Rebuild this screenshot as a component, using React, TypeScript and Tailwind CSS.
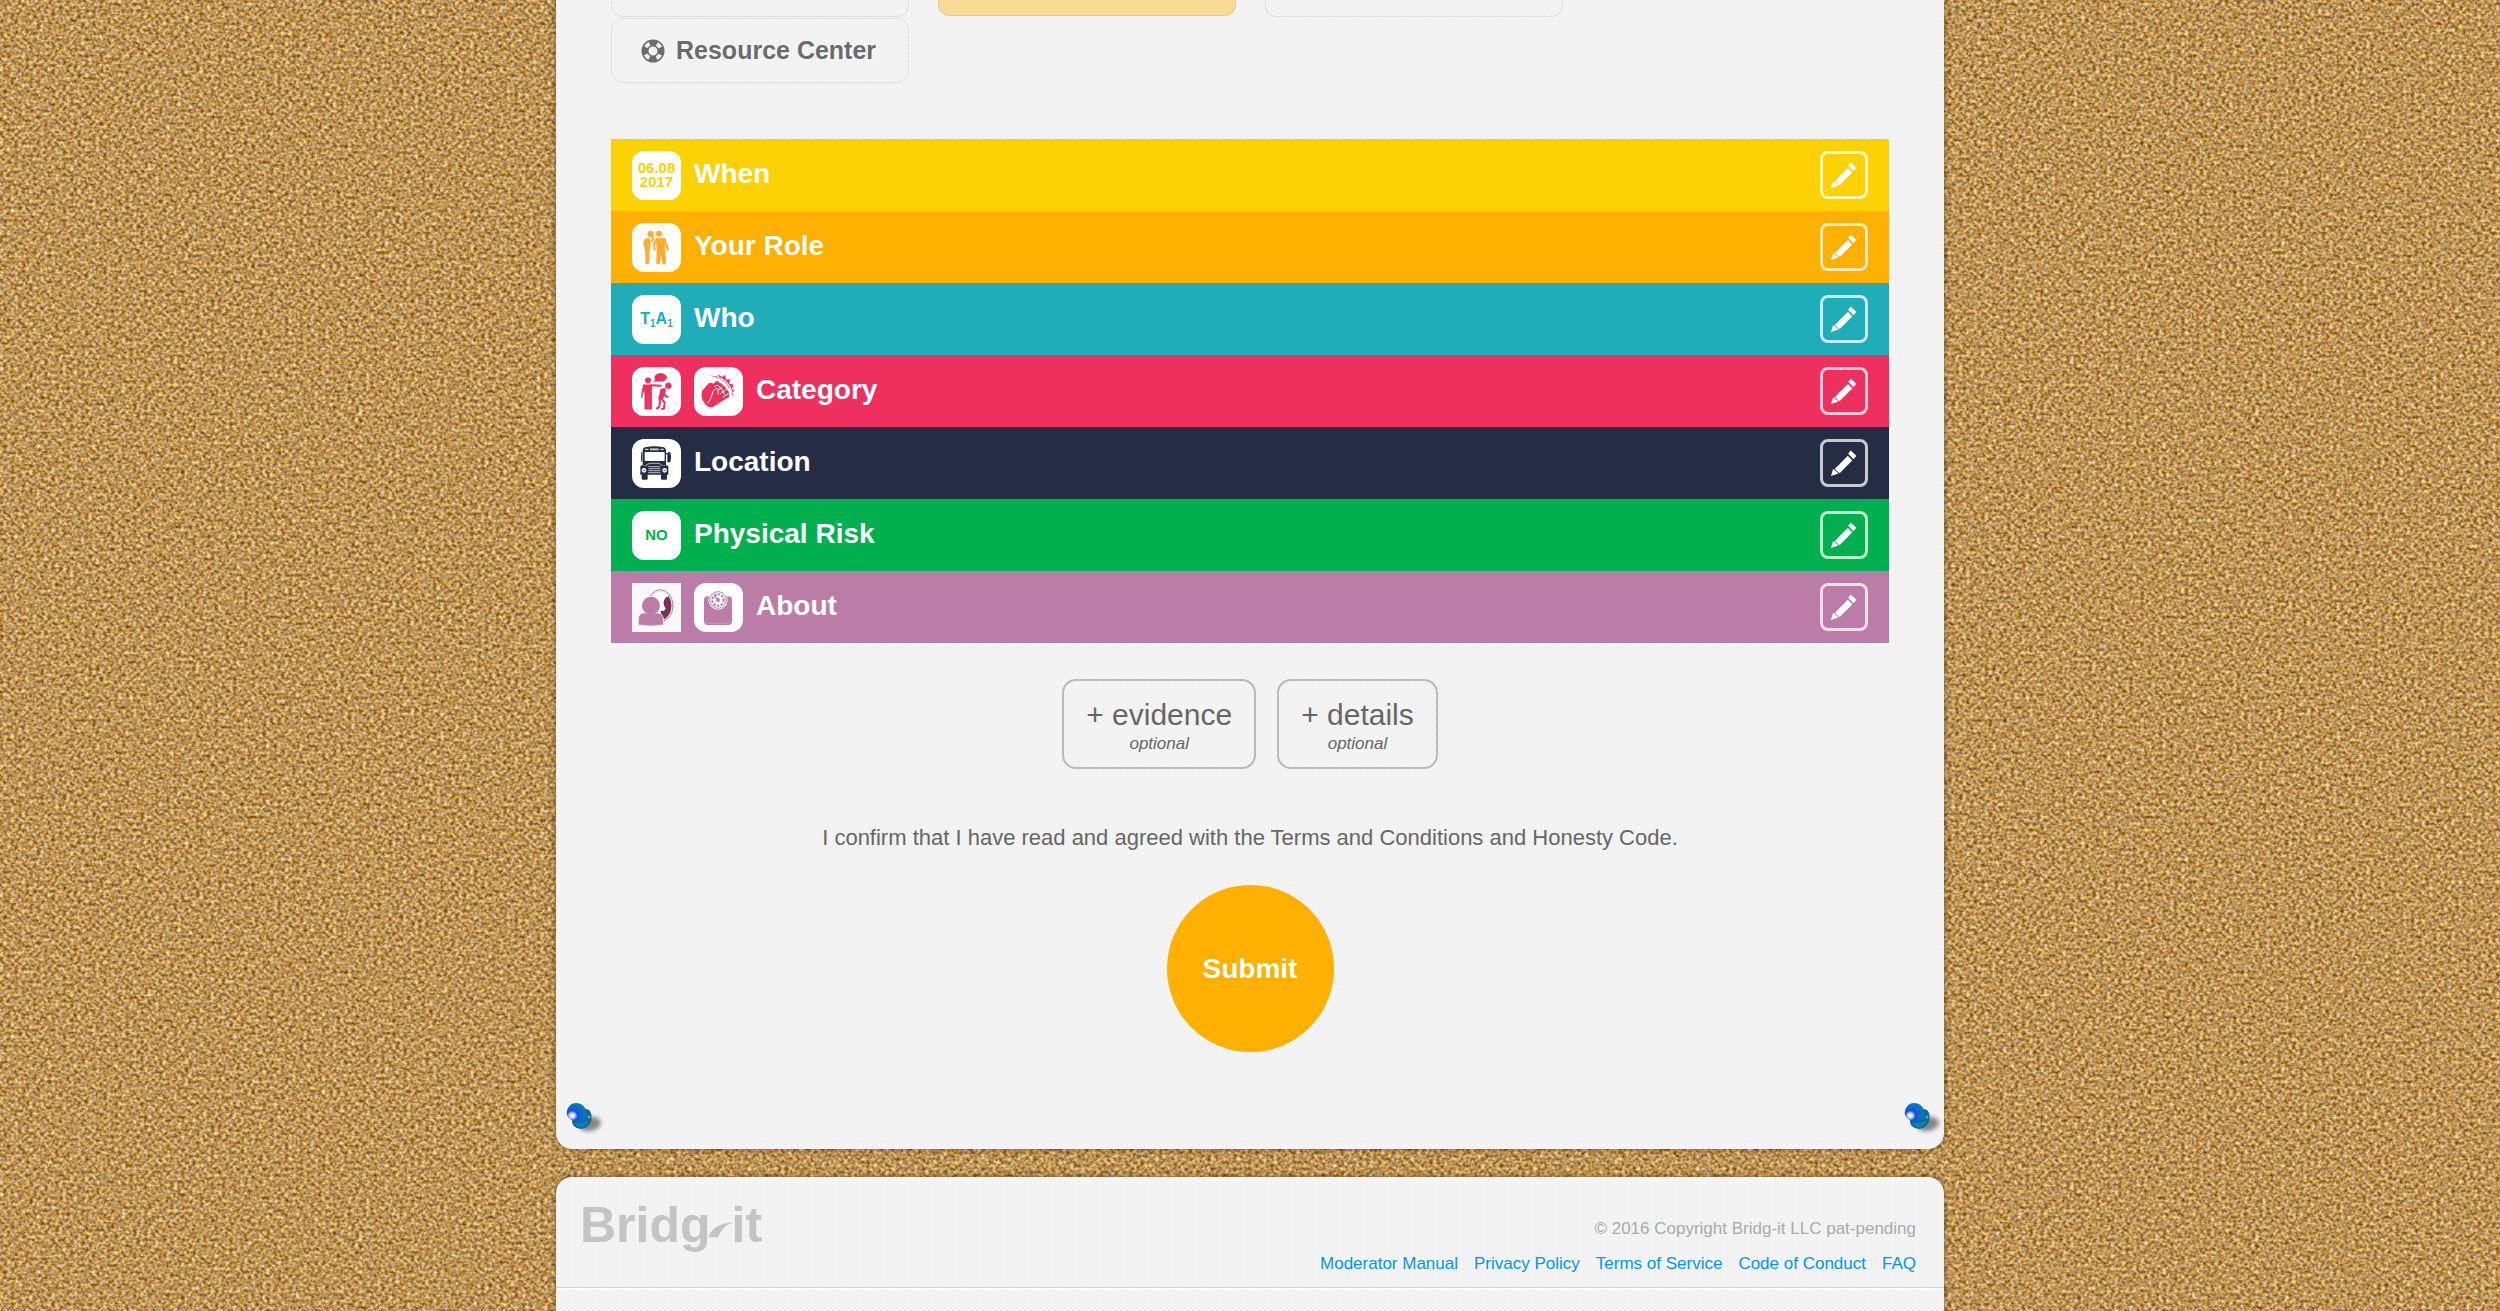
import type { ReactNode } from "react";

const paper =
  "bg-[#f4f4f4] bg-[radial-gradient(circle_at_25%_25%,#ebebeb_0,#ebebeb_1px,transparent_1px),radial-gradient(circle_at_75%_75%,#eeeeee_0,#eeeeee_1px,transparent_1px)] bg-[size:6px_4px] shadow-[0_0_6px_rgba(60,35,0,0.6)]";

function Cork() {
  return (
    <svg aria-hidden="true" className="absolute inset-0 -z-10 h-full w-full">
      <filter id="cork" x="0" y="0" width="100%" height="100%" colorInterpolationFilters="sRGB">
        <feTurbulence type="fractalNoise" baseFrequency="0.27 0.31" numOctaves="2" seed="21" />
        <feColorMatrix
          values="0.85 0.3 0 0 0.165
                  0.9 0.1 0.15 0 0.005
                  0.8 -0.05 0.6 0 -0.335
                  0 0 0 0 1"
        />
      </filter>
      <rect width="100%" height="100%" filter="url(#cork)" />
    </svg>
  );
}

function Tile({ children, square = false }: { children: ReactNode; square?: boolean }) {
  return (
    <span
      className={
        square
          ? "flex size-[49px] shrink-0 items-center justify-center bg-[#f8f8f8]"
          : "flex size-[49px] shrink-0 items-center justify-center rounded-xl bg-white"
      }
    >
      {children}
    </span>
  );
}

function Glyph({ children }: { children: ReactNode }) {
  return (
    <svg viewBox="0 0 147 147" className="size-full" aria-hidden="true" fill="none" strokeLinecap="round" strokeLinejoin="round">
      {children}
    </svg>
  );
}

function FriendsIcon() {
  return (
    <Glyph>
      <g fill="#ffab2e" stroke="#ffab2e">
        <circle cx="56" cy="33" r="9" />
        <circle cx="81" cy="32" r="8.5" />
        <path d="M44 46C34 50 32 60 37 72C41 84 42 96 40 122L50 123C53 104 52 94 52 82L55 68L53 47Z" strokeWidth="1" />
        <path d="M46 55L62 54L64 42" strokeWidth="5" fill="none" />
        <path d="M74 46H96L99 82L101 122H92L87 88L83 122H74L75 84Z" strokeWidth="2" />
        <path d="M73 49L66 64L68 80M98 49L107 80" strokeWidth="6" fill="none" />
      </g>
    </Glyph>
  );
}

function TauntIcon() {
  return (
    <Glyph>
      <g fill="#ee305f" stroke="#ee305f">
        <circle cx="48" cy="40" r="8.5" />
        <path d="M38 54H58V126H50V88H47V126H39V88Z" strokeWidth="3" />
        <path d="M36 55L31 80M58 55L86 56" strokeWidth="6" fill="none" />
        <ellipse cx="86" cy="31" rx="18" ry="12" />
        <path d="M70 36L66 44L80 42Z" strokeWidth="1" />
        <circle cx="109" cy="56" r="9" />
        <path d="M97 65L87 68L82 92L92 94L99 72Z" strokeWidth="4" />
        <path d="M98 70L96 82L107 90M87 94L98 106L96 124L90 126M82 92L84 106L81 120L75 124" strokeWidth="6" fill="none" />
      </g>
      <path d="M31 80L30 90" stroke="#31b5c4" strokeWidth="6" />
    </Glyph>
  );
}

function FistIcon() {
  return (
    <Glyph>
      <path d="M24 72L44 49Q52 45 58 51L66 43Q74 40 77 49Q86 47 87 56Q97 58 96 67Q107 72 105 82Q108 91 98 94L58 119Q46 124 36 115L25 99Q20 84 24 72Z" fill="#ee305f" />
      <path d="M42 108Q54 90 57 74L65 65Q70 63 73 68L72 82M62 58L70 54L77 61M77 59L88 73M86 73L94 85M84 60L74 68M94 70L80 80M103 80L86 91" stroke="#fff" strokeWidth="3" />
      <path d="M44 25L75 30L72 22L84 30L94 24L96 38L108 36L106 50L119 53L114 66L122 71L115 76L119 93Q111 68 97 50Q80 33 44 25Z" fill="#ee305f" />
      <path d="M72 31Q104 40 114 76" stroke="#fff" strokeWidth="4" />
    </Glyph>
  );
}

function BusIcon() {
  return (
    <Glyph>
      <g fill="#252d45">
        <path d="M32 78V34Q33 25 43 24Q67 19 91 24Q101 25 102 34V78Z" />
        <path d="M102 42H108V40H115Q120 55 115 70H106V46H102Z" />
        <path d="M31 40H28Q26 56 28 68H31Z" />
        <path d="M25 83Q26 79 31 79H45Q49 71 56 71H79Q85 71 89 79H103Q108 79 109 83V107H25Z" />
        <rect x="29" y="104" width="18" height="18" rx="3" />
        <rect x="87" y="104" width="18" height="18" rx="3" />
      </g>
      <rect x="38" y="39" width="60" height="27" rx="2" fill="#fff" />
      <rect x="54" y="28" width="26" height="6" fill="#bfc2cb" />
      <path d="M40 31H48M86 31H94" stroke="#fff" strokeWidth="3" />
      <path d="M42 79Q48 73 56 73H79Q86 73 90 79M50 83H84M50 89H84M50 95H84M50 101H84" stroke="#fff" strokeWidth="2" />
      <circle cx="36" cy="94" r="7" fill="#fff" />
      <circle cx="98" cy="94" r="7" fill="#fff" />
      <path d="M33 94H39M95 94H101" stroke="#252d45" strokeWidth="2" />
    </Glyph>
  );
}

function MirrorIcon() {
  return (
    <Glyph>
      <ellipse cx="85" cy="68" rx="38" ry="48" fill="#fafafa" stroke="#bb7da8" strokeWidth="3" />
      <ellipse cx="85" cy="68" rx="34" ry="44" stroke="#d9b5cd" strokeWidth="1.5" />
      <path d="M110 40Q118 52 118 68Q118 92 99 108L89 102L86 84Q99 86 101 76Q93 68 96 52Q100 42 110 40Z" fill="#7a3156" />
      <circle cx="57" cy="68" r="28" fill="#bb7da8" stroke="#f8f8f8" strokeWidth="3" />
      <path d="M19 126V108Q20 92 35 90H78Q93 92 94 108V126Q56 132 19 126Z" fill="#bb7da8" stroke="#f8f8f8" strokeWidth="2" />
      <circle cx="57" cy="68" r="26" fill="#bb7da8" />
    </Glyph>
  );
}

function ScaleIcon() {
  return (
    <Glyph>
      <rect x="30" y="40" width="84" height="86" rx="11" fill="#bb7da8" />
      <path d="M35 114Q36 121 44 121H100Q108 121 109 114" stroke="#d9b5cd" strokeWidth="1.5" />
      <circle cx="72" cy="51" r="29" fill="#fff" />
      <circle cx="72" cy="51" r="25" stroke="#bb7da8" strokeWidth="3" />
      <circle cx="72" cy="51" r="17" stroke="#bb7da8" strokeWidth="6" strokeDasharray="7 4" strokeLinecap="butt" />
      <circle cx="72" cy="51" r="6" fill="#bb7da8" />
      <path d="M72 51L62 39" stroke="#bb7da8" strokeWidth="4" />
    </Glyph>
  );
}

function PencilIcon() {
  return (
    <svg viewBox="6 6 132 132" className="size-full" aria-hidden="true" fill="#fff">
      <path d="M31 113L38 90L55 105ZM43 91L84 49L98 64L58 104ZM85 43L93 33L111 49L102 60Z" />
    </svg>
  );
}

function RingIcon() {
  return (
    <svg viewBox="0 0 24 24" className="size-6 shrink-0" aria-hidden="true" fill="none">
      <circle cx="12" cy="12" r="8" stroke="#6b6b6b" strokeWidth="7" />
      <circle cx="12" cy="12" r="8" stroke="#f3f3f3" strokeWidth="4" strokeDasharray="5 7.57" strokeDashoffset="-3.8" />
    </svg>
  );
}

function Pin() {
  return (
    <svg viewBox="0 0 40 34" className="h-[34px] w-10" aria-hidden="true">
      <defs>
        <radialGradient id="pinHead" cx="0.28" cy="0.68" r="0.75">
          <stop offset="0" stopColor="#fff" />
          <stop offset="0.16" stopColor="#cfe0ff" />
          <stop offset="0.36" stopColor="#1650d8" />
          <stop offset="0.8" stopColor="#0b74c0" />
          <stop offset="1" stopColor="#0b7cb8" />
        </radialGradient>
        <filter id="pinShade" x="-50%" y="-50%" width="200%" height="200%">
          <feGaussianBlur stdDeviation="2" />
        </filter>
      </defs>
      <ellipse cx="24" cy="22" rx="11" ry="7" transform="rotate(-12 24 22)" fill="#000" opacity="0.45" filter="url(#pinShade)" />
      <path d="M6 17Q5 26 15 27Q21 27 25 20Q27 12 23 8L17 6Z" fill="#0a6a98" />
      <path d="M8 21Q11 26 17 25Q22 23 22 18Q17 22 8 21Z" fill="#127fb8" />
      <path d="M1 9Q3 1 10 1Q18 1 20 9Q22 16 16 19Q8 21 3 16Q0 13 1 9Z" fill="url(#pinHead)" />
      <circle cx="23" cy="15" r="1.5" fill="#38b8c0" />
    </svg>
  );
}

type Section = { title: string; color: string; icons: ReactNode };

const sections: Section[] = [
  {
    title: "When",
    color: "bg-[#fcd205]",
    icons: (
      <Tile>
        <span className="text-center text-[15px] leading-[14px] font-bold text-[#fcd205]">
          06.08
          <br />
          2017
        </span>
      </Tile>
    ),
  },
  { title: "Your Role", color: "bg-[#ffb000]", icons: <Tile><FriendsIcon /></Tile> },
  {
    title: "Who",
    color: "bg-[#1fadba]",
    icons: (
      <Tile>
        <span className="text-[16px] leading-4 font-bold text-[#1fadba]">
          T<sub className="text-[10px]">1</sub>A<sub className="text-[10px]">1</sub>
        </span>
      </Tile>
    ),
  },
  {
    title: "Category",
    color: "bg-[#ef305f]",
    icons: (
      <>
        <Tile><TauntIcon /></Tile>
        <Tile><FistIcon /></Tile>
      </>
    ),
  },
  { title: "Location", color: "bg-[#252d45]", icons: <Tile><BusIcon /></Tile> },
  {
    title: "Physical Risk",
    color: "bg-[#00af4d]",
    icons: (
      <Tile>
        <span className="text-[15px] leading-4 font-bold text-[#00af4d]">NO</span>
      </Tile>
    ),
  },
  {
    title: "About",
    color: "bg-[#bb7da8]",
    icons: (
      <>
        <Tile square><MirrorIcon /></Tile>
        <Tile><ScaleIcon /></Tile>
      </>
    ),
  },
];

function OptionalButton({ label }: { label: string }) {
  return (
    <button type="button" className="flex h-[90px] flex-col items-center justify-center rounded-[14px] border-2 border-[#b9b9b9] px-[22px] pt-2">
      <span className="text-[30px] leading-8">{label}</span>
      <span className="text-[17px] leading-[26px] italic">optional</span>
    </button>
  );
}

const links = ["Moderator Manual", "Privacy Policy", "Terms of Service", "Code of Conduct", "FAQ"];

export default function App() {
  return (
    <div className="relative isolate flex min-h-screen flex-col items-center overflow-hidden bg-[#be9350] font-['Liberation_Sans',Arial,sans-serif] text-[#666]">
      <Cork />
      <main className={`relative w-full max-w-[1388px] rounded-b-2xl px-[55px] pb-[97px] ${paper}`}>
        <nav className="grid grid-cols-[298px_298px_298px] gap-x-[29px] gap-y-px">
          <div className="h-[17px] rounded-b-xl border border-t-0 border-[#e0e0e0]" />
          <div className="h-4 rounded-b-xl border border-t-0 border-[#ecca70] bg-[#f8dc95]" />
          <div className="h-[17px] rounded-b-xl border border-t-0 border-[#e0e0e0]" />
          <a
            href="#resources"
            className="flex h-[65px] items-center gap-[11px] rounded-xl border border-[#e0e0e0] pl-[29px] text-[25px] font-bold text-[#6b6b6b] [text-shadow:1px_1px_0_#fff]"
          >
            <RingIcon />
            Resource Center
          </a>
        </nav>

        <ul className="mt-14">
          {sections.map((s) => (
            <li key={s.title} className={`flex h-[72px] items-center gap-[13px] px-[21px] ${s.color}`}>
              {s.icons}
              <h2 className="flex-1 pb-0.5 text-[28px] leading-8 font-bold text-white">{s.title}</h2>
              <button type="button" aria-label={`Edit ${s.title}`} className="size-12 shrink-0 rounded-lg border-3 border-white/75">
                <PencilIcon />
              </button>
            </li>
          ))}
        </ul>

        <div className="mt-9 flex justify-center gap-[21px]">
          <OptionalButton label="+ evidence" />
          <OptionalButton label="+ details" />
        </div>

        <p className="mt-[53px] text-center text-[22px] leading-8">
          I confirm that I have read and agreed with the Terms and Conditions and Honesty Code.
        </p>
        <div className="mt-[31px] flex justify-center">
          <button type="submit" className="size-[167px] rounded-full bg-[#ffb000] text-[28px] font-bold text-white">
            Submit
          </button>
        </div>

        <span className="absolute bottom-[13px] left-2.5"><Pin /></span>
        <span className="absolute right-0 bottom-[13px]"><Pin /></span>
      </main>

      <footer className={`mt-7 w-full max-w-[1388px] flex-1 rounded-t-2xl ${paper}`}>
        <div className="flex h-[111px] justify-between border-b border-[#d6d6d6] pr-7 pl-6 shadow-[0_2px_0_#fff]">
          <div className="flex pt-5 text-[50px] leading-[56px] font-bold text-[#c4c4c4]" aria-label="Bridg-it">
            <span>Bridg</span>
            <svg viewBox="0 0 81 52" className="mt-6 -mr-0.5 -ml-1 h-[17px] w-[27px]" aria-hidden="true">
              <path d="M3 50Q18 8 79 4Q45 16 33 50Z" fill="#c4c4c4" />
            </svg>
            <span>it</span>
          </div>
          <div className="flex flex-col items-end pt-10 text-[17px]">
            <p className="leading-6 text-[#aaa]">© 2016 Copyright Bridg-it LLC pat-pending</p>
            <ul className="mt-[11px] flex gap-4 leading-6">
              {links.map((l) => (
                <li key={l}>
                  <a href={`#${l.toLowerCase().replaceAll(" ", "-")}`} className="text-[#0096f0]">{l}</a>
                </li>
              ))}
            </ul>
          </div>
        </div>
      </footer>
    </div>
  );
}
